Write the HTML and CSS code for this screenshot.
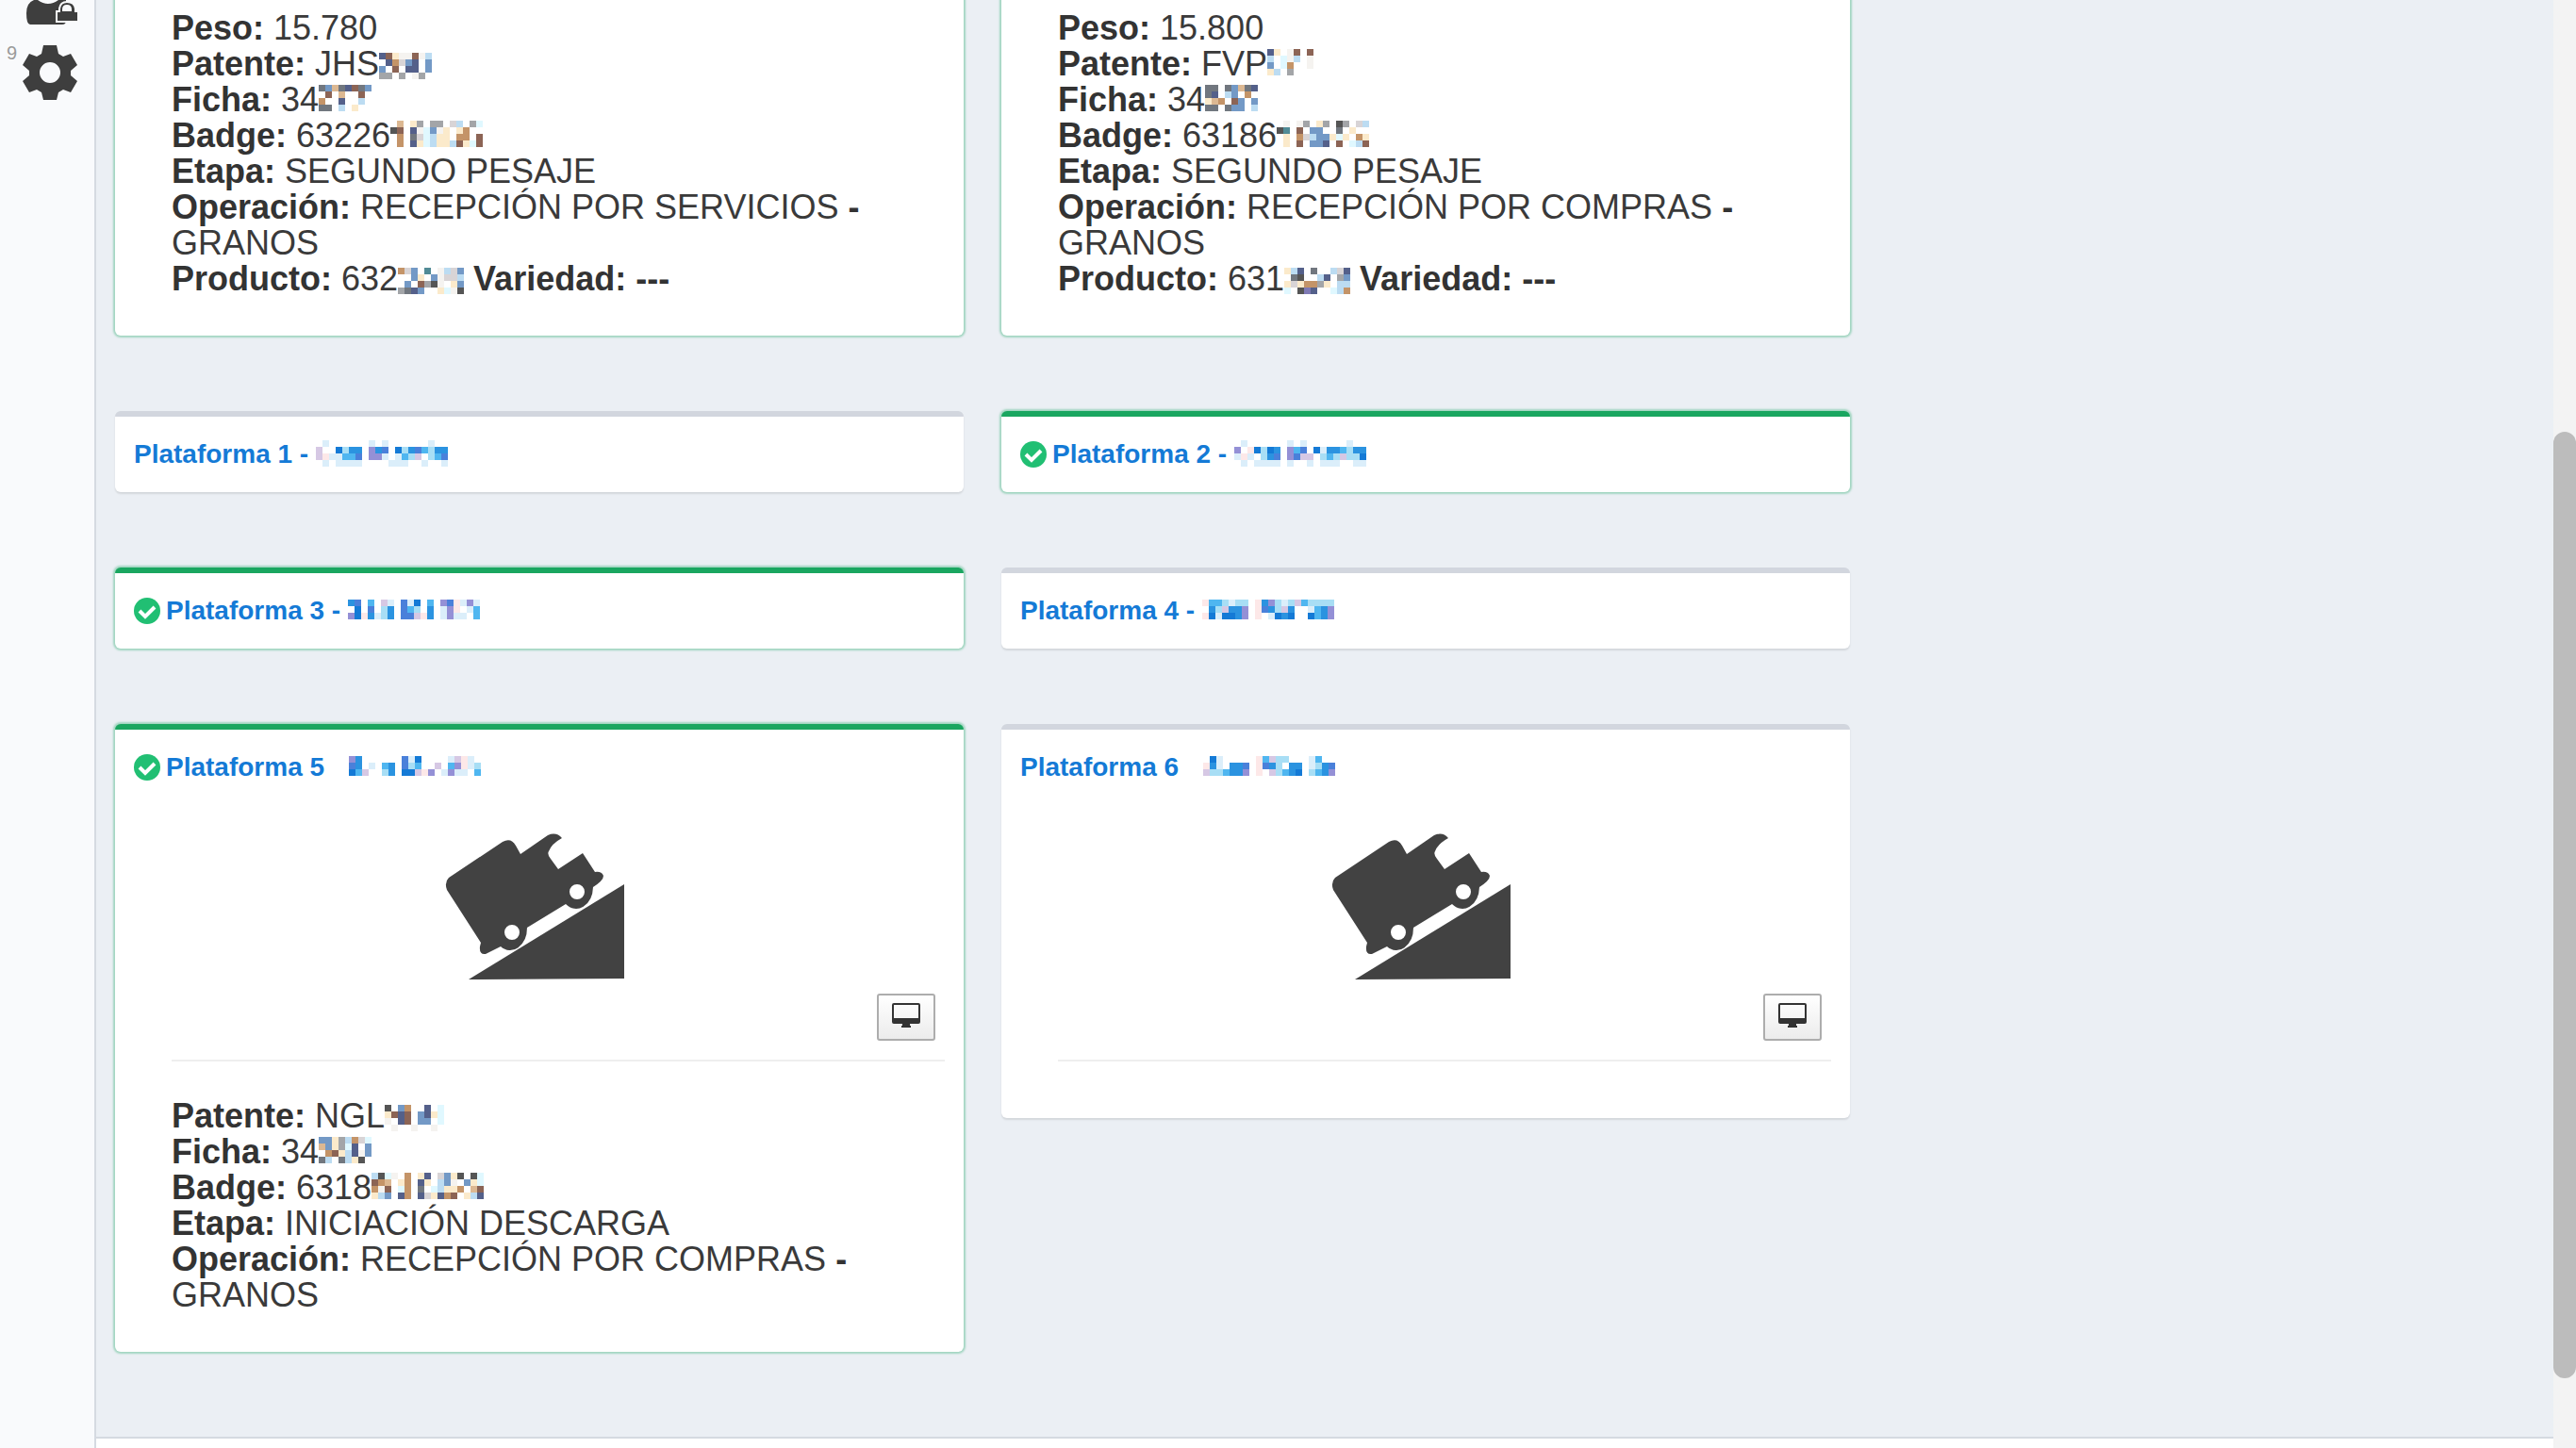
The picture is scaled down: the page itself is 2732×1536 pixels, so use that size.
FILE: index.html
```
<!DOCTYPE html>
<html lang="es">
<head>
<meta charset="utf-8">
<title>Plataformas</title>
<link rel="stylesheet" href="styles.css">
</head>
<body>
<svg class="defs" aria-hidden="true">
  <symbol id="check" viewBox="0 0 28 28"><circle cx="14" cy="14" r="14" fill="#21bf73"/><path d="M6 14l6 6L22 10" fill="none" stroke="#fff" stroke-width="4"/></symbol>
  <symbol id="truck" viewBox="0 0 190 156">
    <path fill="#424242" fill-rule="evenodd" d="M4 47L61 9Q70 4 75 13L80 22L109 2Q118-2 124 5Q113 11 110 19Q108 22 112 27L120 38L146 21L159 41Q166 40 168 45Q168 50 157 57A18 24 0 0 1 128 75L87 100A18 24 0 0 1 59 120L43 128Q36 129 37 120L38 116L2 60Q-1 52 4 47ZM71 97A8 8 0 1 0 71 113A8 8 0 1 0 71 97ZM140 54A8 8 0 1 0 140 70A8 8 0 1 0 140 54Z"/>
    <path fill="#424242" d="M190 54V154L25 155Z"/>
  </symbol>
  <symbol id="monitor" viewBox="0 0 30 26"><path fill="#333" fill-rule="evenodd" d="M2 0H28Q30 0 30 2V20Q30 22 28 22H19V24H20V26H10V24H11V22H2Q0 22 0 20V2Q0 0 2 0ZM2 2V16H28V2Z"/></symbol>
</svg>
<div class="app">
  <nav class="sidebar" aria-label="Menú">
    <a href="#usuarios" class="side-link" aria-label="Usuarios">
      <svg width="58" height="26" viewBox="0 0 58 26"><path fill="#3e3e3e" d="M12 0Q4 3 4 14Q4 26 8 26H42Q46 26 46 22V0H38Q27 8 16 0Z"/><path fill="#3e3e3e" stroke="#f9fafc" stroke-width="2" d="M36 12H39V9Q40 2 47 2Q55 2 56 9V12H59V23H36Z"/><path fill="#f9fafc" d="M42 12V10Q42 5 47 5Q52 5 52 10V12Z"/></svg>
    </a>
    <span class="side-mark">9</span>
    <a href="#ajustes" class="side-link" aria-label="Ajustes">
      <svg width="58" height="58" viewBox="0 0 58 58"><path fill="#3e3e3e" fill-rule="evenodd" d="M22 0H36L38 9L43 12L51 9L58 21L51 27V32L58 38L51 50L43 47L38 50L36 58H22L20 50L15 47L7 50L0 38L7 32V27L0 21L7 9L15 12L20 9ZM29 18A11 11 0 1 0 29 40A11 11 0 1 0 29 18Z"/></svg>
    </a>
  </nav>
  <div class="page">
    <main class="grid">
      <section class="box box-active box-cut">
        <div class="details">
          <p><b>Peso:</b> 15.780</p>
          <p><b>Patente:</b> JHS<svg class="mosaic mosaic-low" data-cells="nrywwrwl|.nopbn.b|b.r.nn.b|gg.g.wg."></svg></p>
          <p><b>Ficha:</b> 34<svg class="mosaic" data-cells="sbtsnrsb|.r.t..r.|o..n..l.|ss.l.y.."></svg></p>
          <p><b>Badge:</b> 63226<svg class="mosaic" data-cells=".t.yg.gg.pl.gc|kr.nwcbwy.yo..|.o.spclyy.oo.r|.o.nyclyylrycr"></svg></p>
          <p><b>Etapa:</b> SEGUNDO PESAJE</p>
          <p><b>Operación:</b> RECEPCIÓN POR SERVICIOS <b>-</b> GRANOS</p>
          <p><b>Producto:</b> 632<svg class="mosaic mosaic-low" data-cells="opb.T.wlpb|..by.bwppl|.b.rgkw.yb|gsnb..ycwk"></svg> <b>Variedad: ---</b></p>
        </div>
      </section>
      <section class="box box-active box-cut">
        <div class="details">
          <p><b>Peso:</b> 15.800</p>
          <p><b>Patente:</b> FVP<svg class="mosaic" data-cells="ny.wr.r|l.cwl.w|b.co..w|yl.g..."></svg></p>
          <p><b>Ficha:</b> 34<svg class="mosaic" data-cells="ss.sbtsn|sn.lb.o.|yto.rb.b|ss.sbb.l"></svg></p>
          <p><b>Badge:</b> 63186<svg class="mosaic" data-cells=".w.wg.yg.kg.pl|kT.r.bb..s.y..|.y.oplbbycy.oy|.y.r.bbn.r.clr"></svg></p>
          <p><b>Etapa:</b> SEGUNDO PESAJE</p>
          <p><b>Operación:</b> RECEPCIÓN POR COMPRAS <b>-</b> GRANOS</p>
          <p><b>Producto:</b> 631<svg class="mosaic mosaic-low" data-cells="yln.s..lpn|.sk..ln.gb|ypyoogy.ll|c.kvn..clo"></svg> <b>Variedad: ---</b></p>
        </div>
      </section>

      <section class="box">
        <h2 class="title"><a href="#p1">Plataforma 1 - <svg class="mosaic mosaic-low" data-cells=".C......C.C......C..|P..BLSS.VSX.BLSXALSS|PKCCAAX.VVC.CALP.LAX|.C.CCCC....CCC..C..C"></svg></a></h2>
      </section>
      <section class="box box-active">
        <h2 class="title"><svg class="check"><use href="#check"/></svg><a href="#p2">Plataforma 2 - <svg class="mosaic mosaic-low" data-cells=".C......C.C......C..|V.KBLBS.VAX.BCSSALSS|CKC.LSX.VXPP.LALPLLB|.C.CCCC.C..C.CCC..CC"></svg></a></h2>
      </section>

      <section class="box box-active">
        <h2 class="title"><svg class="check"><use href="#check"/></svg><a href="#p3">Plataforma 3 - <svg class="mosaic" data-cells="SX.A.PC.XCB.A.VXKCVC|.B.X.LS.XAL.S.CVK.CA|VBKSCLS.XXPKS.CVCC.A"></svg></a></h2>
      </section>
      <section class="box">
        <h2 class="title"><a href="#p4">Plataforma 4 - <svg class="mosaic" data-cells="KAALCLL.KSVLCLPALLLL|.SLPSSV.KXSLPS..CASV|KBCBBSV.K.CBSB..BASV"></svg></a></h2>
      </section>

      <section class="box box-active">
        <h2 class="title"><svg class="check"><use href="#check"/></svg><a href="#p5">Plataforma 5 <svg class="mosaic mosaic-apart" data-cells="VS......XCB....CPKC.|XS.C.AS.XLA..P.AVKCL|BAP..LS.BBPKV.CVCC.A"></svg></a></h2>
        <div class="media">
          <svg class="truck"><use href="#truck"/></svg>
          <button type="button" class="screen-btn" aria-label="Ver pantalla"><svg width="30" height="26"><use href="#monitor"/></svg></button>
        </div>
        <hr>
        <div class="details details-below">
          <p><b>Patente:</b> NGL<svg class="mosaic mosaic-low" data-cells="k.bo..n.c|yrnr.bnyc|w.nr.bb.c|.w..w..w."></svg></p>
          <p><b>Ficha:</b> 34<svg class="mosaic" data-cells="bbyglopc|tbygcn.b|.orylnwb|sl.slyk."></svg></p>
          <p><b>Badge:</b> 6318<svg class="mosaic" data-cells="lkcw.o.yn.pbyk.kc|rot.yo.ny.lbw.byc|owr.co.s.clyyo.tr|ylb.no.npynor.yln"></svg></p>
          <p><b>Etapa:</b> INICIACIÓN DESCARGA</p>
          <p><b>Operación:</b> RECEPCIÓN POR COMPRAS <b>-</b> GRANOS</p>
        </div>
      </section>
      <section class="box">
        <h2 class="title"><a href="#p6">Plataforma 6 <svg class="mosaic mosaic-apart" data-cells=".BC.....KAPLL...CA..|KSC.SSX.KXSL.SS.CLSX|PLLASSV.K.PLASB.LASV"></svg></a></h2>
        <div class="media">
          <svg class="truck"><use href="#truck"/></svg>
          <button type="button" class="screen-btn" aria-label="Ver pantalla"><svg width="30" height="26"><use href="#monitor"/></svg></button>
        </div>
        <hr class="last">
      </section>
    </main>
    <footer class="footer"></footer>
  </div>
  <div class="scroll" aria-hidden="true"><div class="thumb"></div></div>
</div>
<script src="mosaic.js"></script>
</body>
</html>
```
FILE: styles.css
```
* { box-sizing: border-box; }
body { margin: 0; font-family: "Liberation Sans", Arial, sans-serif; color: #333; background: #ebeff4; }
.defs { display: none; }
.app { display: flex; min-height: 100vh; }
.sidebar { flex: 0 0 102px; background: #f9fafc; border-right: 2px solid #d5dae1; display: grid; grid-template-columns: 24px 58px; align-content: start; row-gap: 22px; }
.side-link { grid-column: 2; display: block; }
.side-link svg { display: block; }
.side-mark { grid-column: 1; padding-left: 7px; font-size: 20px; line-height: 16px; color: #9a9a9a; }
.page { flex: 1; min-width: 0; display: flex; flex-direction: column; }
.grid { display: grid; grid-template-columns: 1fr 1fr; column-gap: 40px; row-gap: 80px; align-items: start; width: 100%; max-width: 1880px; padding: 0 20px 90px; }
.footer { flex: 1; min-height: 12px; background: #fff; border-top: 2px solid #d5dae1; }
.box { background: #fff; border-top: 6px solid #d2d6de; border-radius: 6px; box-shadow: 0 2px 2px rgba(0, 0, 0, .1); }
.box-active { border-top-color: #1aa660; box-shadow: 0 0 2px 2px rgba(26, 166, 96, .35); }
.box-cut { border-top: 0; border-radius: 0 0 6px 6px; padding-top: 11px; }
.title { margin: 0; padding: 20px; display: flex; align-items: center; gap: 6px; font-size: 28px; line-height: 40px; font-weight: bold; white-space: nowrap; }
.title a { color: #147ad6; text-decoration: none; }
.check { width: 28px; height: 28px; }
.details { padding: 0 60px 41px; font-size: 36px; line-height: 38px; color: #3a3a3a; }
.details p { margin: 0; }
.details b { color: #333; }
.details-below { padding-top: 39px; }
.mosaic { display: inline-block; vertical-align: baseline; }
.mosaic-low { margin-bottom: -4px; }
.mosaic-apart { margin-left: 18px; }
.media { padding: 30px 30px 20px 20px; display: flex; flex-direction: column; align-items: center; gap: 14px; }
.truck { width: 190px; height: 156px; }
.screen-btn { align-self: flex-end; width: 62px; height: 50px; padding: 0 0 4px; display: flex; align-items: center; justify-content: center; border: 2px solid #adadad; border-radius: 3px; background: linear-gradient(#fff, #ececec); }
hr { margin: 0 20px 0 60px; border: 0; border-top: 2px solid #eee; }
hr.last { margin-bottom: 60px; }
.scroll { flex: 0 0 24px; background: #f3f3f3; display: grid; grid-template-rows: 458fr 1004fr 74fr; }
.thumb { grid-row: 2; border-radius: 12px; background: #bcbcbc; }
```
FILE: mosaic.js
```
// Draws the coloured blocks that hide private values.
const CELL = 7;
const COLORS = {
  k: '#555555', s: '#71777f', g: '#a3a5a8', n: '#54608a', b: '#7399c6', l: '#bcdcf2', c: '#e0f8ff',
  o: '#c49468', t: '#dcb892', r: '#8c6455', y: '#fbeacb', p: '#d8d4d6', w: '#f5f3f0', v: '#7f7ab5', T: '#518b96',
  B: '#147ad6', S: '#2b93e0', A: '#4fb6f0', L: '#a8def5', C: '#dbeefa', V: '#9490d6', P: '#d6c8e4', K: '#fde8e8', X: '#4a80da'
};
document.querySelectorAll('.mosaic').forEach(svg => {
  const rows = svg.dataset.cells.split('|');
  svg.setAttribute('width', rows[0].length * CELL);
  svg.setAttribute('height', rows.length * CELL);
  rows.forEach((row, y) => [...row].forEach((key, x) => {
    if (!COLORS[key]) return;
    const rect = document.createElementNS('http://www.w3.org/2000/svg', 'rect');
    rect.setAttribute('x', x * CELL);
    rect.setAttribute('y', y * CELL);
    rect.setAttribute('width', CELL);
    rect.setAttribute('height', CELL);
    rect.setAttribute('fill', COLORS[key]);
    svg.append(rect);
  }));
});
```
